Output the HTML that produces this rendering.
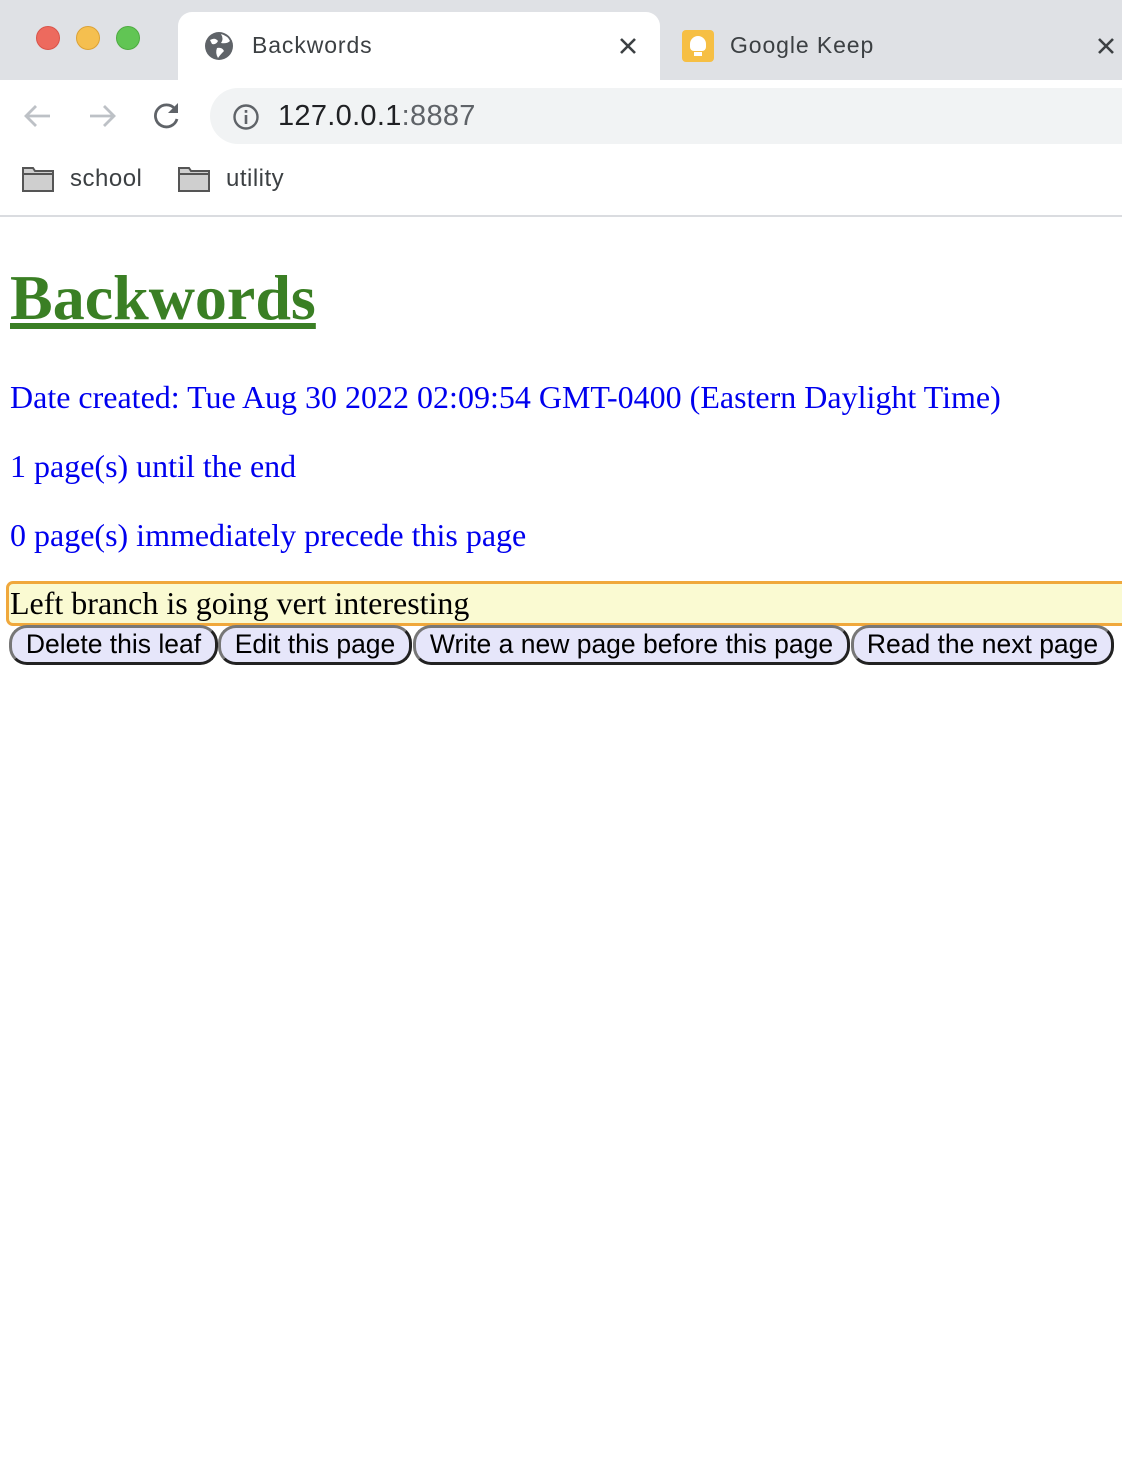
<!DOCTYPE html>
<html><head><meta charset="utf-8"><style>
*{margin:0;padding:0;box-sizing:border-box}
body{width:1122px;height:1458px;background:#fff;position:relative;overflow:hidden;font-family:"Liberation Sans",sans-serif}
.abs{position:absolute}
.tabbar{left:0;top:0;width:1122px;height:80px;background:#dfe1e5}
.dot{width:24px;height:24px;border-radius:50%;top:26px}
.tab1{left:178px;top:12px;width:482px;height:70px;background:#fff;border-radius:14px 14px 0 0}
.tabt{font-size:23px;color:#3c4043;top:32px;letter-spacing:0.9px}
.url{left:210px;top:88px;width:940px;height:56px;background:#f1f3f4;border-radius:28px}
.bm{font-size:24px;color:#3c4043;top:165px;letter-spacing:0.5px}
.sep{left:0;top:215px;width:1122px;height:2px;background:#dadce0}
.serif{font-family:"Liberation Serif",serif}
.blue{color:#0000ee;font-size:32px;left:10px}
.btn{top:625px;height:40px;background:#e6e6fa;border:3px solid #222;border-top-color:#777;border-left-color:#777;border-radius:18px;font-size:26.5px;color:#000;text-align:center;line-height:33px;white-space:nowrap}
</style></head><body>
<div class="abs tabbar"></div>
<div class="abs dot" style="left:36px;background:#ed6a5e;border:1px solid #d9544a"></div>
<div class="abs dot" style="left:76px;background:#f5bf4f;border:1px solid #dca235"></div>
<div class="abs dot" style="left:116px;background:#61c554;border:1px solid #4eab41"></div>
<div class="abs tab1"></div>
<svg class="abs" style="left:204px;top:31px" width="30" height="30" viewBox="0 0 30 30"><circle cx="15" cy="15" r="14" fill="#5f6368"/><path d="M6 9 Q11 6 14 10 Q12 14 8 13 Z M17 3 Q20 8 17 12 Q23 13 26 10 Q24 5 17 3Z M13 17 Q18 16 20 20 Q16 24 14 27 Q11 22 13 17Z" fill="#fff"/></svg>
<div class="abs tabt" style="left:252px">Backwords</div>
<svg class="abs" style="left:618px;top:36px" width="20" height="20" viewBox="0 0 20 20"><path d="M3 3L17 17M17 3L3 17" stroke="#3c4043" stroke-width="2.6"/></svg>
<div class="abs" style="left:682px;top:30px;width:32px;height:32px;background:#f6bf44;border-radius:4px"></div>
<div class="abs" style="left:690px;top:36px;width:16px;height:15px;background:#fff;border-radius:8px 8px 4px 4px"></div>
<div class="abs" style="left:694px;top:52px;width:8px;height:4px;background:#fff"></div>
<div class="abs tabt" style="left:730px">Google Keep</div>
<svg class="abs" style="left:1096px;top:36px" width="20" height="20" viewBox="0 0 20 20"><path d="M3 3L17 17M17 3L3 17" stroke="#3c4043" stroke-width="2.6"/></svg>
<svg class="abs" style="left:20px;top:100px" width="100" height="32" viewBox="0 0 100 32"><path d="M30 16H6M16 6L6 16L16 26" stroke="#bdc1c6" stroke-width="2.8" fill="none"/><path d="M70 16H94M84 6L94 16L84 26" stroke="#bdc1c6" stroke-width="2.8" fill="none"/></svg>
<svg class="abs" style="left:150px;top:100px" width="32" height="32" viewBox="0 0 32 32"><path d="M25 9 A11 11 0 1 0 27 19" stroke="#5f6368" stroke-width="2.8" fill="none"/><path d="M28 3V13H18Z" fill="#5f6368"/></svg>
<div class="abs url"></div>
<svg class="abs" style="left:232px;top:103px" width="28" height="28" viewBox="0 0 28 28"><circle cx="14" cy="14" r="11.5" stroke="#5f6368" stroke-width="2.4" fill="none"/><rect x="12.7" y="12" width="2.6" height="9" fill="#5f6368"/><rect x="12.7" y="7" width="2.6" height="2.8" fill="#5f6368"/></svg>
<div class="abs" style="left:278px;top:100px;font-size:29px;color:#202124;letter-spacing:0.3px">127.0.0.1<span style="color:#5f6368">:8887</span></div>
<svg class="abs" style="left:21px;top:166px" width="34" height="27" viewBox="0 0 34 27"><path d="M2 2H12L14 5H32V25H2Z" fill="#cfcfcf" stroke="#555" stroke-width="2"/><path d="M2 8H32" stroke="#555" stroke-width="2"/></svg>
<div class="abs bm" style="left:70px">school</div>
<svg class="abs" style="left:177px;top:166px" width="34" height="27" viewBox="0 0 34 27"><path d="M2 2H12L14 5H32V25H2Z" fill="#cfcfcf" stroke="#555" stroke-width="2"/><path d="M2 8H32" stroke="#555" stroke-width="2"/></svg>
<div class="abs bm" style="left:226px">utility</div>
<div class="abs sep"></div>
<div class="abs serif" style="left:10px;top:260px;font-size:64px;font-weight:bold;color:#3a7f24;text-decoration:underline;line-height:76px">Backwords</div>
<div class="abs serif blue" style="top:377px;line-height:40px">Date created: Tue Aug 30 2022 02:09:54 GMT-0400 (Eastern Daylight Time)</div>
<div class="abs serif blue" style="top:446px;line-height:40px">1 page(s) until the end</div>
<div class="abs serif blue" style="top:515px;line-height:40px">0 page(s) immediately precede this page</div>
<div class="abs serif" style="left:6px;top:581px;width:1130px;height:45px;background:#fafad2;border:3px solid #f0a83c;border-radius:7px;font-size:32px;line-height:38px;padding-left:1px;color:#000">Left branch is going vert interesting</div>
<div class="abs btn" style="left:9px;width:209px">Delete this leaf</div>
<div class="abs btn" style="left:218px;width:194px">Edit this page</div>
<div class="abs btn" style="left:413px;width:437px">Write a new page before this page</div>
<div class="abs btn" style="left:851px;width:263px">Read the next page</div>
</body></html>
